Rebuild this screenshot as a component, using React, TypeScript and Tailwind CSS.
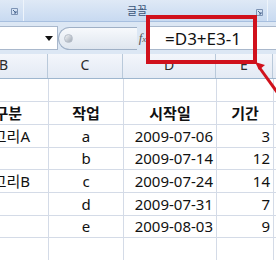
import type { ReactNode } from 'react'

// ── Data ─────────────────────────────────────────────────────────────────────
type Row = { h: number; b?: string; c?: string; d?: string; e?: string; bold?: boolean }

const rows: Row[] = [
  { h: 23 },
  { h: 23, b: '구분', c: '작업', d: '시작일', e: '기간', bold: true },
  { h: 23, b: '카테고리A', c: 'a', d: '2009-07-06', e: '3' },
  { h: 22, c: 'b', d: '2009-07-14', e: '12' },
  { h: 23, b: '카테고리B', c: 'c', d: '2009-07-24', e: '14' },
  { h: 23, c: 'd', d: '2009-07-31', e: '7' },
  { h: 22, c: 'e', d: '2009-08-03', e: '9' },
  { h: 23 },
]

// ── Small pieces ─────────────────────────────────────────────────────────────
function Launcher() {
  return (
    <svg width="7" height="7" viewBox="0 0 7 7" className="block">
      <path d="M0.5 0.5h6v6h-6z" fill="none" stroke="#7d93b4" strokeWidth="1" />
      <path d="M2 2l3 3M5 3v2h-2" fill="none" stroke="#4a6790" strokeWidth="1" />
    </svg>
  )
}

function Cell({ w, align, children, bold }: { w: string; align: string; children?: ReactNode; bold?: boolean }) {
  return (
    <div
      className={`${w} ${align} ${bold ? 'font-bold' : ''} h-full shrink-0 flex items-center whitespace-nowrap border-r border-[#d4dbe7]`}
    >
      {children}
    </div>
  )
}

// ── App ───────────────────────────────────────────────────────────────────────
export default function App() {
  return (
    <div className="relative w-[276px] h-[260px] overflow-hidden bg-white font-['Noto_Sans','Noto_Sans_CJK_KR',sans-serif] text-[#111]">
      {/* Ribbon (글꼴 group) */}
      <div className="h-[22px] flex bg-gradient-to-b from-[#dfe9f6] to-[#c8daf1] border-b border-[#a7bfdf]">
        <div className="w-[24px] shrink-0 border-r border-[#eef4fb] flex items-end pb-[6px] pl-[11px]">
          <Launcher />
        </div>
        <div className="flex-1 relative">
          <span className="absolute left-[103px] top-[3px] text-[11px] leading-[14px] text-[#3a5478] font-['Noto_Sans_CJK_KR',sans-serif]">
            글꼴
          </span>
          <span className="absolute left-[232px] top-[9px]">
            <Launcher />
          </span>
        </div>
        <div className="w-[9px] shrink-0 border-l border-[#eef4fb]" />
      </div>

      {/* Formula bar */}
      <div className="h-[32px] bg-[#dce7f4] pt-[4px] flex items-start">
        <div className="w-[58px] h-[24px] shrink-0 bg-white border-y border-r border-[#a9b8cc] relative">
          <svg width="8" height="5" viewBox="0 0 8 5" className="absolute left-[45px] top-[9px]">
            <path d="M0 0h8l-4 5z" fill="#111" />
          </svg>
        </div>
        <div className="w-[79px] h-[23px] mt-[1px] shrink-0 rounded-l-full border border-r-0 border-[#9fb0c6] bg-gradient-to-b from-[#f7f9fc] to-[#dfe6ef] flex items-center pl-[5px]">
          <div className="w-[9px] h-[9px] rounded-full bg-gradient-to-br from-[#f4f5f7] to-[#9ea7b3] border border-[#b6bec9]" />
        </div>
        <div className="w-[12px] h-[24px] shrink-0 flex items-center justify-center font-['Liberation_Serif',serif] italic text-[13px] text-[#555] pr-[1px]">
          f<span className="text-[9px] mt-[3px]">x</span>
        </div>
        <div className="flex-1 h-[24px] bg-white border border-r-0 border-[#a9b8cc] flex items-center pl-[15px] text-[17px] leading-none">
          =D3+E3-1
        </div>
      </div>

      {/* Column headers */}
      <div className="h-[25px] flex bg-gradient-to-b from-[#f3f6fb] to-[#e3eaf4] border-b border-[#9eb6ce] text-[14px] text-[#2b2b2b] leading-none">
        <div className="w-[49px] shrink-0 h-full border-r border-[#b9c9da] flex items-start pt-[4px] -ml-[1px]">B</div>
        <div className="w-[75px] shrink-0 h-full border-r border-[#b9c9da] flex justify-center items-start pt-[4px]">C</div>
        <div className="w-[93px] shrink-0 h-full border-r border-[#b9c9da] flex justify-center items-start pt-[4px]">D</div>
        <div className="w-[57px] shrink-0 h-full border-r border-[#b9c9da] flex justify-center items-start pt-[4px]">E</div>
        <div className="flex-1" />
      </div>

      {/* Sheet rows */}
      {rows.map((r, i) => (
        <div key={i} style={{ height: r.h }} className="flex border-b border-[#d4dbe7] text-[15px] leading-none">
          <Cell w="w-[49px]" align={r.bold ? 'justify-end pr-[26px]' : 'justify-end pr-[18px]'} bold={r.bold}>
            {r.b}
          </Cell>
          <Cell w="w-[75px]" align="justify-center" bold={r.bold}>
            {r.c}
          </Cell>
          <Cell w="w-[93px]" align={r.bold ? 'justify-center' : 'justify-end pr-[3px]'} bold={r.bold}>
            {r.d}
          </Cell>
          <Cell w="w-[57px]" align={r.bold ? 'justify-center' : 'justify-end pr-[3px]'} bold={r.bold}>
            {r.e}
          </Cell>
          <div className="flex-1" />
        </div>
      ))}

      {/* Red highlight box + arrow */}
      <div className="absolute left-[146px] top-[15px] w-[111px] h-[49px] border-[4px] border-[#d0111c]" />
      <svg className="absolute left-0 top-0" width="276" height="260" viewBox="0 0 276 260">
        <line x1="259" y1="67" x2="292" y2="113" stroke="#d0111c" strokeWidth="3" />
        <path d="M255 62l10 3l-6 5z" fill="#d0111c" />
      </svg>
    </div>
  )
}
